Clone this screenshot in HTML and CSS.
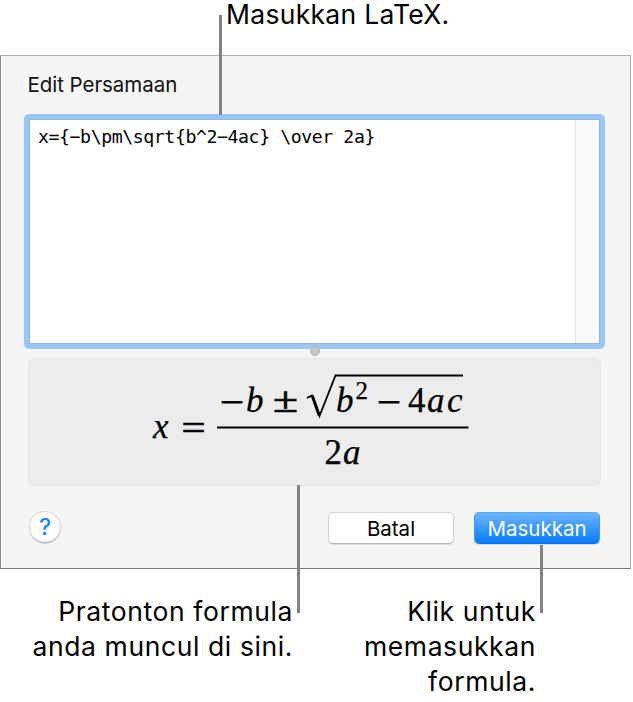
FILE: index.html
```html
<!DOCTYPE html>
<html lang="ms">
<head>
<meta charset="utf-8">
<title>Edit Persamaan</title>
<link rel="stylesheet" href="styles.css">
</head>
<body>
<main class="figure">
  <p class="callout callout-top">Masukkan LaTeX.</p>
  <section class="dialog">
    <h1 class="title">Edit Persamaan</h1>
    <div class="editor">
      <div class="code">x={−b\pm\sqrt{b^2−4ac} \over 2a}</div>
      <div class="scrollbar"></div>
    </div>
    <div class="splitter"><span class="grip"></span></div>
    <div class="preview">
      <svg class="formula" width="322" height="110" viewBox="150 368 322 110">
        <g class="math">
          <text class="it" x="153" y="438">x</text>
          <text class="op" x="181.500" y="440" textLength="24" lengthAdjust="spacingAndGlyphs">=</text>
          <text class="op" x="220" y="414" textLength="24" lengthAdjust="spacingAndGlyphs">−</text>
          <text class="it" x="246" y="412">b</text>
          <text class="op" x="273" y="411.500" textLength="25" lengthAdjust="spacingAndGlyphs">±</text>
          <text class="it" x="336" y="412">b</text>
          <text class="sup" x="355.500" y="398.500">2</text>
          <text class="op" x="377" y="414" textLength="24" lengthAdjust="spacingAndGlyphs">−</text>
          <text x="408" y="412">4</text>
          <text class="it" x="427" y="412">a</text>
          <text class="it" x="447" y="412">c</text>
          <text x="324.500" y="464">2</text>
          <text class="it" x="343" y="464">a</text>
        </g>
        <path class="rule" d="M217 427.500H468.500"/>
        <path class="root" d="M307 398L312 395.500L319.500 416L335.500 375.500H463"/>
        <path class="root-stem" d="M312.300 396L319.300 415.500"/>
      </svg>
    </div>
    <div class="actions">
      <button class="help">?</button>
      <button class="btn">Batal</button>
      <button class="btn primary">Masukkan</button>
    </div>
  </section>
  <div class="notes">
    <p class="callout note-preview">Pratonton formula<br>anda muncul di sini.</p>
    <p class="callout note-insert">Klik untuk<br>memasukkan<br>formula.</p>
  </div>
  <span class="leader leader-latex"></span>
  <span class="leader leader-preview"></span>
  <span class="leader leader-insert"></span>
</main>
</body>
</html>
```
FILE: styles.css
```css
* { box-sizing: border-box; }
body { margin: 0; background: #fff; color: #000; font-family: Inter, "Liberation Sans", sans-serif; }
.figure { position: relative; width: 633px; height: 702px; overflow: hidden; }
.callout { margin: 0; font-size: 26.5px; line-height: 35px; letter-spacing: .6px; white-space: nowrap; }
.callout-top { height: 55px; padding: 0 0 0 226px; line-height: 29px; letter-spacing: .3px; }
.dialog {
  display: flex; flex-direction: column;
  width: 631px; height: 514px; padding: 0 25px 0 23px;
  background: #f5f5f5;
  border: 1px solid #8c8c8c; border-top-color: #b0b0b0; border-right-color: #b0b0b0; border-bottom-color: #777;
}
.title { margin: 0; height: 58px; padding-left: 3.5px; font-size: 20.5px; font-weight: 400; line-height: 58px; color: #111; letter-spacing: -.05px; }
.editor {
  display: flex; height: 235px; width: 581px; flex: none;
  border: 5px solid #98c6f8; border-radius: 5px; background: #fff;
  box-shadow: inset 0 0 0 1px #98b6d8;
}
.code { flex: 1; padding: 6px 0 0 9px; font: 18.2px/24px "DejaVu Sans Mono", monospace; letter-spacing: -.42px; white-space: pre; }
.scrollbar { width: 24px; margin: 1px; background: #fafafa; border-left: 1px solid #e4e4e4; }
.splitter { height: 9px; display: flex; justify-content: center; align-items: flex-start; }
.grip { width: 10px; height: 10px; margin-top: -3px; border-radius: 50%; background: #c6c6c6; border: 1px solid #b3b3b3; z-index: 1; }
.preview {
  height: 128px; width: 573px; margin-left: 4px; flex: none;
  padding: 10px 0 0 122px; background: #ececec; border: 1px solid #e6e6e6; border-radius: 6px;
}
.formula { display: block; margin-left: -1px; margin-top: -1px; }
.math { font-family: "Liberation Serif", serif; font-size: 35px; fill: #000; stroke: #000; stroke-width: .25px; }
.it { font-style: italic; }
.op { stroke-width: .7px; }
.sup { font-size: 25px; }
.rule, .root, .root-stem { fill: none; stroke: #000; }
.rule { stroke-width: 2.2; }
.root { stroke-width: 1.8; }
.root-stem { stroke-width: 3; }
.actions { display: flex; align-items: flex-start; padding: 26px 0 0 5px; }
.help {
  width: 32px; height: 32px; margin: -1px 267px 0 0; padding: 0;
  border: 1px solid #d6d6d6; border-bottom-color: #bcbcbc; border-radius: 50%;
  background: #fff; color: #1683ff; font: 500 23px/30px Inter, sans-serif;
  box-shadow: 0 1px 1px rgba(0,0,0,.14);
}
.btn {
  width: 126px; height: 32px; margin-right: 20px; padding: 0; flex: none;
  border: 1px solid #d2d2d2; border-bottom-color: #b8b8b8; border-radius: 5px;
  background: #fff; color: #000; font: 400 20.5px/32px Inter, sans-serif;
  box-shadow: 0 1px 1px rgba(0,0,0,.1);
}
.primary { margin-right: 0; color: #fff; border-color: #5aa9f8 #3f97f8 #0873f2; background: linear-gradient(#6cb3fa, #077dff); }
.notes { display: flex; padding-top: 25px; text-align: right; }
.note-preview { width: 293px; }
.note-insert { width: 243px; }
.leader { position: absolute; width: 3px; background: #838383; }
.leader-latex { left: 219px; top: 15px; height: 100px; }
.leader-preview { left: 297px; top: 485px; height: 128px; }
.leader-insert { left: 540px; top: 545px; height: 68px; }
```
